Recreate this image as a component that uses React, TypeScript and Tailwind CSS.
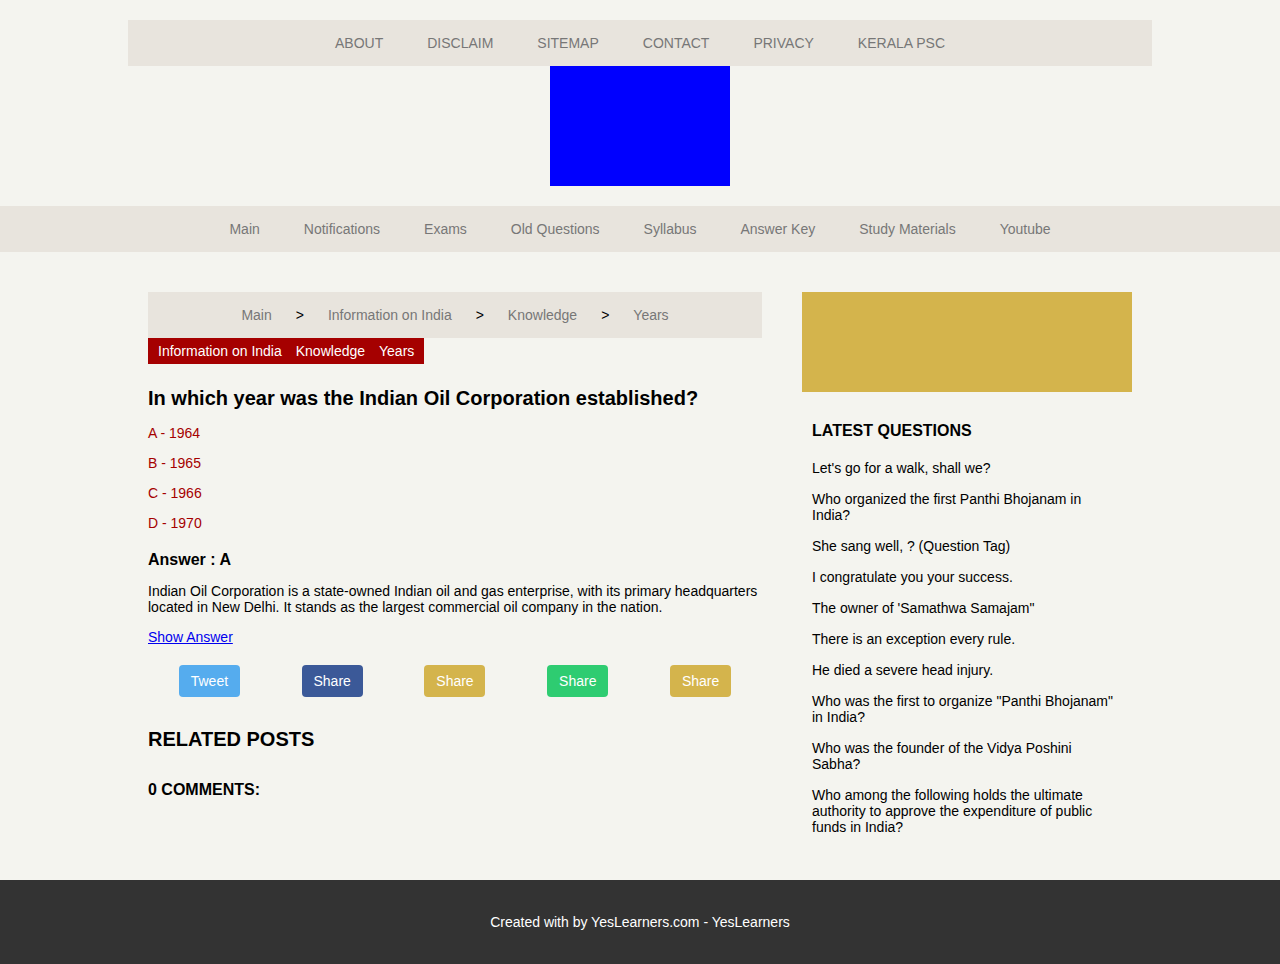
import React from "react";

const topLinks = ["ABOUT", "DISCLAIM", "SITEMAP", "CONTACT", "PRIVACY", "KERALA PSC"];
const mainLinks = ["Main", "Notifications", "Exams", "Old Questions", "Syllabus", "Answer Key", "Study Materials", "Youtube"];
const latest = [
  "Let's go for a walk, shall we?",
  "Who organized the first Panthi Bhojanam in India?",
  "She sang well, ? (Question Tag)",
  "I congratulate you your success.",
  "The owner of 'Samathwa Samajam\"",
  "There is an exception every rule.",
  "He died a severe head injury.",
  "Who was the first to organize \"Panthi Bhojanam\" in India?",
  "Who was the founder of the Vidya Poshini Sabha?",
  "Who among the following holds the ultimate authority to approve the expenditure of public funds in India?",
];

const shares = [
  { label: "Tweet", cls: "bg-[#55acee]" },
  { label: "Share", cls: "bg-[#3b5998]" },
  { label: "Share", cls: "bg-[#d4b44c]" },
  { label: "Share", cls: "bg-[#2ecc71]" },
  { label: "Share", cls: "bg-[#d4b44c]" },
];

export default function App() {
  return (
    <div className="min-h-[964px] bg-[#f4f4ef] font-['Liberation_Sans',Arial,sans-serif] text-black flex flex-col">
      <div className="pt-[20px] flex flex-col items-center">
        <nav className="w-[1024px] h-[46px] bg-[#e8e4dd] flex items-center justify-center">
          {topLinks.map((l) => (
            <a key={l} className="px-[22px] text-[14px] leading-[16px] text-[#777777]">{l}</a>
          ))}
        </nav>
        <div className="w-[180px] h-[120px] bg-[#0000ff]" />
      </div>
      <nav className="mt-[20px] h-[46px] bg-[#e8e4dd] flex items-center justify-center">
        {mainLinks.map((l) => (
          <a key={l} className="px-[22px] text-[14px] leading-[16px] text-[#777777]">{l}</a>
        ))}
      </nav>

      <div className="flex-1 w-[984px] mx-auto pt-[40px] pb-[45px] flex gap-[40px]">
        <main className="w-[614px] flex flex-col items-start">
          <div className="w-full h-[46px] bg-[#e8e4dd] flex items-center justify-center gap-[24px] text-[14px] leading-[16px]">
            <span className="text-[#777777]">Main</span>
            <span>&gt;</span>
            <span className="text-[#777777]">Information on India</span>
            <span>&gt;</span>
            <span className="text-[#777777]">Knowledge</span>
            <span>&gt;</span>
            <span className="text-[#777777]">Years</span>
          </div>
          <div className="h-[26px] bg-[#a50000] flex items-center px-[10px] gap-[14px] text-white text-[14px] leading-[16px]">
            <span>Information on India</span>
            <span>Knowledge</span>
            <span>Years</span>
          </div>
          <h1 className="mt-[23px] text-[20px] leading-[23px] font-bold">In which year was the Indian Oil Corporation established?</h1>
          <div className="mt-[15px] flex flex-col gap-[14px] text-[14px] leading-[16px] text-[#a50000]">
            <p>A - 1964</p>
            <p>B - 1965</p>
            <p>C - 1966</p>
            <p>D - 1970</p>
          </div>
          <h3 className="mt-[20px] text-[16px] leading-[18px] font-bold">Answer : A</h3>
          <p className="mt-[14px] text-[14px] leading-[16px]">
            Indian Oil Corporation is a state-owned Indian oil and gas enterprise, with its primary headquarters located in New Delhi. It stands as the largest commercial oil company in the nation.
          </p>
          <a className="mt-[14px] text-[14px] leading-[16px] text-[#0000ee] underline">Show Answer</a>
          <div className="mt-[20px] w-full grid grid-cols-5">
            {shares.map((s, i) => (
              <div key={i} className="flex justify-center">
                <span className={`${s.cls} w-[61px] h-[32px] rounded-[4px] flex items-center justify-center text-white text-[14px]`}>{s.label}</span>
              </div>
            ))}
          </div>
          <h2 className="mt-[31px] text-[20px] leading-[23px] font-bold">RELATED POSTS</h2>
          <h3 className="mt-[30px] text-[16px] leading-[18px] font-bold">0 COMMENTS:</h3>
        </main>

        <aside className="w-[330px] flex flex-col">
          <div className="h-[100px] bg-[#d4b44c]" />
          <div className="px-[10px] w-[330px]">
            <h3 className="mt-[30px] text-[16px] leading-[18px] font-bold">LATEST QUESTIONS</h3>
            <ul className="mt-[20px] w-[310px] flex flex-col gap-[15px] text-[14px] leading-[16px]">
              {latest.map((q, i) => (
                <li key={i}>{q}</li>
              ))}
            </ul>
          </div>
        </aside>
      </div>

      <footer className="h-[84px] bg-[#333333] flex items-center justify-center text-white text-[14px]">
        Created with by YesLearners.com - YesLearners
      </footer>
    </div>
  );
}
